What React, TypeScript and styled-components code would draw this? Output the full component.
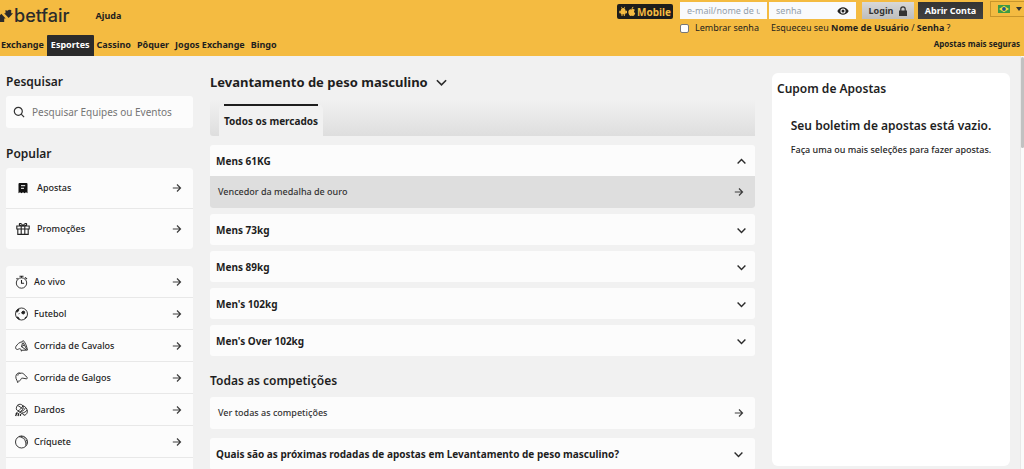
import React, { useState } from 'react';
import styled, { createGlobalStyle, css } from 'styled-components';

const GlobalStyle = createGlobalStyle`
  *, *::before, *::after { box-sizing: border-box; }
  body {
    margin: 0;
    background: #f1f1f1;
    color: #1e1e1e;
    font-family: "Noto Sans", "Open Sans", sans-serif;
    font-size: 9px;
    line-height: 14px;
  }
  button, input { font-family: inherit; font-size: inherit; line-height: inherit; color: inherit; }
  button { border: 0; padding: 0; background: none; cursor: pointer; }
  a { color: inherit; text-decoration: none; }
  h1, h2, h3, p, ul { margin: 0; padding: 0; }
  ul { list-style: none; }
  svg { display: block; flex: none; }
`;

/* ---------- Shell ---------- */

const Page = styled.div`
  display: flex;
  flex-direction: column;
  height: 100vh;
  overflow: hidden;
`;

const Header = styled.header`
  display: flex;
  justify-content: space-between;
  flex: none;
  min-height: 56px;
  background: #f4bb41;
  overflow: hidden;
`;

const HeaderLeft = styled.div`
  display: flex;
  flex-direction: column;
  justify-content: space-between;
`;

const BrandRow = styled.div`
  display: flex;
  align-items: center;
  gap: 26px;
  height: 31px;
`;

const Brand = styled.a`
  display: flex;
  align-items: center;
  color: #2b2b2b;
  font-family: Inter, sans-serif;
  font-size: 18px;
  font-weight: 500;
  line-height: 20px;
`;

const HelpLink = styled.a`
  font-weight: 700;
`;

const Nav = styled.nav`
  display: flex;
`;

const NavLink = styled.a<{ $active?: boolean }>`
  padding: 3px 3px 4px;
  font-weight: 700;
  border-radius: 1px 1px 0 0;
  ${(p) => p.$active && css`
    padding: 3px 4px 4px;
    background: #2b2b2b;
    color: #fff;
  `}
  &:first-child { padding-left: 1px; }
`;

const Account = styled.div`
  display: flex;
  flex-direction: column;
  flex: none;
`;

const AccountTop = styled.div`
  display: flex;
  align-items: flex-start;
  gap: 7px;
  padding-top: 2px;
`;

const MobileBadge = styled.a`
  display: flex;
  align-items: center;
  gap: 1px;
  height: 15px;
  margin-top: 2px;
  padding: 0 2px;
  border-radius: 2px;
  background: #1d1d1b;
  color: #f4bb41;
  font-size: 10px;
  font-weight: 700;
`;

const LoginForm = styled.form`
  display: grid;
  grid-template-columns: 87px 87px 52px 65px;
  column-gap: 2px;
  row-gap: 2px;
`;

const Field = styled.div`
  display: flex;
  align-items: center;
  height: 17px;
  padding: 0 7px;
  background: #f9fafc;
  & > input {
    flex: 1;
    min-width: 0;
    height: 17px;
    padding: 0;
    border: 0;
    outline: 0;
    background: transparent;
  }
  & > input::placeholder { color: #93a0ab; opacity: 1; }
`;

const LoginButton = styled.button`
  display: flex;
  align-items: center;
  justify-content: center;
  gap: 6px;
  height: 17px;
  margin-left: 4px;
  margin-right: -4px;
  background: linear-gradient(#d8d8d8, #bdbdbd);
  color: #333;
  font-weight: 700;
`;

const JoinButton = styled.button`
  height: 17px;
  margin-left: 6px;
  margin-right: -6px;
  background: linear-gradient(#333, #414141);
  color: #fff;
  font-weight: 700;
`;

const Remember = styled.label`
  display: flex;
  align-items: center;
  gap: 6px;
  white-space: nowrap;
  & > input {
    appearance: none;
    width: 9px;
    height: 9px;
    margin: 0;
    border: 1px solid #777;
    border-radius: 2px;
    background: #fff;
  }
  & > input:checked { background: #2b2b2b; }
`;

const Forgot = styled.p`
  grid-column: 2 / -1;
  padding: 0 2px;
  white-space: nowrap;
  & a { font-weight: 700; }
`;

const LocaleButton = styled.button`
  display: flex;
  align-items: center;
  gap: 6px;
  height: 16px;
  margin: -1px 0 0 6px;
  padding: 0 2px 0 7px;
  border: 1px solid #c8952b;
  border-right: 0;
`;

const SaferLink = styled.a`
  align-self: flex-end;
  padding: 2px 4px;
  font-size: 8px;
  font-weight: 700;
`;

const Body = styled.div`
  display: flex;
  flex: 1;
  min-height: 0;
`;

const Columns = styled.div`
  display: grid;
  grid-template-columns: 187px minmax(0, 1fr) 238px;
  grid-template-rows: minmax(0, 1fr);
  gap: 17px;
  flex: 1;
  min-height: 0;
  padding: 17px 10px 0 6px;
  overflow: hidden;
`;

const ScrollTrack = styled.div`
  flex: none;
  width: 4px;
  padding-top: 1px;
  background: #fafafa;
  border-left: 1px solid #e8e8e8;
`;

const ScrollThumb = styled.div`
  height: 22%;
  border-radius: 2px;
  background: #c1c1c1;
`;

/* ---------- Sidebar ---------- */

const Sidebar = styled.aside`
  display: flex;
  flex-direction: column;
`;

const Heading = styled.h2`
  font-size: 12px;
  font-weight: 600;
  line-height: 18px;
`;

const SearchBox = styled.label`
  display: flex;
  align-items: center;
  flex: none;
  gap: 7px;
  height: 32px;
  margin: 5px 0 17px;
  padding: 0 7px;
  border-radius: 3px;
  background: #fcfcfc;
  color: #444;
  & > input {
    flex: 1;
    min-width: 0;
    padding: 0;
    border: 0;
    outline: 0;
    background: transparent;
    font-size: 10px;
  }
  & > input::placeholder { color: #757575; opacity: 1; }
`;

const LinkList = styled.ul`
  display: flex;
  flex-direction: column;
  gap: 1px;
  flex: none;
  margin: 5px 0 12px;
  border-radius: 3px;
  background: #e8e8e8;
  overflow: hidden;
`;

const ItemLink = styled.a<{ $tall?: boolean }>`
  display: flex;
  align-items: center;
  gap: ${(p) => (p.$tall ? 7 : 6)}px;
  padding: ${(p) => (p.$tall ? '13px 10px' : '9px 10px 8px 9px')};
  background: #fcfcfc;
  font-weight: 500;
  & > span { flex: 1; }
`;

/* ---------- Main ---------- */

const Main = styled.main`
  display: flex;
  flex-direction: column;
  min-width: 0;
`;

const TitleButton = styled.button`
  display: flex;
  align-items: center;
  gap: 7px;
  font-size: 13px;
  font-weight: 700;
  line-height: 18px;
`;

const TabBar = styled.div`
  display: flex;
  flex: none;
  margin: 9px 0;
  padding: 4px 9px 0;
  border-radius: 3px 0 0 3px;
  background: linear-gradient(#f1f1f1, #dedede);
`;

const Tab = styled.button`
  padding: 0 5px;
  border-radius: 6px 6px 0 0;
  background: #f1f1f1;
  font-size: 10px;
  font-weight: 700;
  & > span {
    display: block;
    padding: 8px 0;
    border-top: 2px solid #1e1e1e;
  }
`;

const Accordion = styled.section`
  flex: none;
  margin-bottom: 6px;
  border-radius: 3px;
  background: #fcfcfc;
  overflow: hidden;
`;

const AccordionButton = styled.button<{ $inset?: boolean }>`
  display: flex;
  align-items: center;
  justify-content: space-between;
  width: 100%;
  padding: ${(p) => (p.$inset ? '9px 11px 9px 6px' : '9px 8px 8px 6px')};
  font-size: 10px;
  font-weight: 700;
  text-align: left;
`;

const MarketLink = styled.a<{ $shaded?: boolean }>`
  display: flex;
  align-items: center;
  justify-content: space-between;
  padding: 9px 10px 9px 8px;
  border-radius: ${(p) => (p.$shaded ? 0 : 3)}px;
  background: ${(p) => (p.$shaded ? '#dedede' : '#fcfcfc')};
  font-weight: 500;
  color: #333;
`;

const Competitions = styled.section`
  display: flex;
  flex-direction: column;
  flex: none;
  gap: 7px;
  margin: 10px 0 9px;
`;

/* ---------- Bet slip ---------- */

const Slip = styled.aside`
  margin-bottom: 3px;
  padding: 7px 5px;
  border-radius: 6px;
  background: #fff;
`;

const SlipEmpty = styled.div`
  padding-top: 19px;
  text-align: center;
  & > p {
    margin-top: 8px;
    font-weight: 500;
  }
`;

/* ---------- Icons ---------- */

const Arrow = () => (
  <svg width="12" height="12" viewBox="0 0 12 12" fill="none" stroke="#3c3c3c" strokeWidth="1.2" aria-hidden="true">
    <path d="M1.800 6h7.600M6 2.500 9.500 6 6 9.500" />
  </svg>
);

const Chevron = ({ up = false, size = 11 }: { up?: boolean; size?: number }) => (
  <svg width={size} height={size} viewBox="0 0 11 11" fill="none" stroke="#2b2b2b" strokeWidth="1.4" aria-hidden="true">
    <path d={up ? 'M1.6 7.500 5.500 3.600l3.900 3.900' : 'M1.600 3.600 5.500 7.500l3.900-3.900'} />
  </svg>
);

const line = { fill: 'none', stroke: '#222', strokeWidth: 0.9 } as const;

const icons: Record<string, React.ReactNode> = {
  bets: (
    <svg width="14" height="14" viewBox="0 0 14 14">
      <path d="M2.5 3q0-1 1-1h7q1 0 1 1v9.3l-1.5-1-1.5 1-1.5-1-1.5 1-1.5-1-1.5 1Z" fill="#111" />
      <path d="M5 4.700h4.200M5 7.300h3" stroke="#fff" strokeWidth="1" />
    </svg>
  ),
  gift: (
    <svg width="14" height="14" viewBox="0 0 14 14" {...line} strokeWidth={1.1}>
      <path d="M.8 4h12.400v3H.8ZM1.800 7v5.400h10.400V7M5.200 4v8.400M8.800 4v8.400M7 4C5.700 1.200 3.400.9 3.300 2.300 3.300 3.400 4.600 4 7 4c2.400 0 3.700-.6 3.700-1.700C10.600.9 8.300 1.200 7 4Z" />
    </svg>
  ),
  live: (
    <svg width="13" height="14" viewBox="0 0 13 14" {...line}>
      <circle cx="6.5" cy="8" r="5.2" />
      <path d="M4.500 1.200h4M6.500 1v1.800M6.500 5v3.200h2.600M10 2.400l2 1.800M2.500 3.200 1.500 4.200" strokeWidth="1.100" />
    </svg>
  ),
  football: (
    <svg width="13" height="14" viewBox="0 0 13 14" {...line}>
      <circle cx="6.5" cy="7" r="6" />
      <path d="m6.800 5 1.300-1 1.500.6.100 1.600-1.300.8-1.500-.6ZM1.200 4.200l1.600-1.900 1.200.1-.6 1.500-1.400 1.400ZM1.800 9.900l1.700.5.9 1.900-1.600-.8ZM9.900 11.500l.5-1.100 1.300-.5ZM4.300 6.300l-.5.9" fill="#222" />
    </svg>
  ),
  horse: (
    <svg width="13" height="14" viewBox="0 0 13 14" {...line}>
      <path d="M8.200 1.500 7 2.900C4.500 3.100 2.400 5 .8 7.700c-.5 1.100 0 2.400 1 2.700 1.100.4 1.700-.6 2.800-.7 1 0 1.500.5 1.800 2.700M8.200 1.500c2 1.800 3.700 5.800 4.200 9.600l-6.200.2M7.500 4l-1 3.700 4.700 3.200M6.500 7.700 9.200 6M8 3.400l3.700 6.900" />
    </svg>
  ),
  greyhound: (
    <svg width="13" height="14" viewBox="0 0 13 14" {...line}>
      <path d="M3 12 1.900 9.400C.4 7.100.4 3.800 2.400 2.500c1.100-.8 2-.5 3.200-.2 1.400-.4 3-.1 3.700 1.400l2.800 2.600c.6.7.1 1.600-.7 1.500L8 7.200c-1.200-.2-1.900.2-2.200 1.200-.2 1.100-1.300 1.800-2.700 1.800M5.600 2.300C3.800 2.200 2.900 3 2.800 4.600" />
    </svg>
  ),
  darts: (
    <svg width="13" height="14" viewBox="0 0 13 14" {...line}>
      <path d="M2.500 2.300C3.900.6 6.600 1.100 8 2.800c2.700.8 4.600 3.200 4.300 6.300-.2 1.700-1.600 3-3.500 3.300M8 2.800c.8 2.500-.2 4.500-2.200 5.400M2.500 2.300C.7 4.700 1.100 7 2.800 8l6.400 3.800M2.800 8C5 6.900 6.400 5.400 8 2.800M4.400 8.900c3-.3 5.300-1.800 6.200-4.400M6.600 10.100c2.600-.3 4.500-1.400 5.600-3.100M2.500 2.300l5 3.200" />
      <path d="M.6 12.900 2 9.600M3 13l.8-2.800M5.300 12.900l.4-1.700M.7 11l2-1.200" strokeWidth="1.300" />
    </svg>
  ),
  cricket: (
    <svg width="13" height="14" viewBox="0 0 13 14" {...line}>
      <circle cx="6.5" cy="7" r="6" />
      <path d="M4 1.700c4.500.4 7.400 3.800 6.800 8.900" />
      <path d="M5.900 1.200c3.900.7 6.200 3.700 6 7.700" strokeDasharray="1 .7" />
    </svg>
  ),
};

const LogoMark = () => (
  <svg width="14" height="14" viewBox="0 0 14 14" fill="#2b2b2b" aria-hidden="true">
    <path d="M5.500 1 7.200 1.700 9 .8 11.200 1v3.200h1.900L8.700 9 4.100 4.200h1.400ZM1.300 4.800 5.700 9.400H4.200V13H0V6.200Z" />
  </svg>
);

const AndroidApple = () => (
  <svg width="17" height="11" viewBox="0 0 17 11" fill="currentColor" aria-hidden="true">
    <path d="M1.800 4.700C1.800 1 6.500 1 6.500 4.700ZM1.800 4.600h4.700v3.600H1.800ZM.3 4.800h1.400v2.400H.3ZM6.600 4.800H8v2.400H6.600ZM2.500 8h1v2h-1ZM4.800 8h1v2h-1ZM2 1l.5-.3.9 1.400-.5.3ZM6.200 1 5.700.7l-.9 1.400.5.3Z" />
    <path d="M12.700 3.400c.8-.6 2.500-.6 3.200.5-1.300.9-1.100 2.600.3 3.300-.5 1.500-1.500 3.100-2.500 2.700-.7-.3-1.200-.3-1.800 0C10.500 10.300 9.300 8 9.300 6.100c0-2.200 1.900-3.500 3.400-2.700ZM12.600 2.900c0-1.200.8-2 1.800-2.200.1 1.200-.7 2.100-1.800 2.200Z" />
  </svg>
);

const Flag = () => (
  <svg width="12" height="8" viewBox="0 0 12 8" aria-hidden="true">
    <path fill="#3d9a45" d="M0 0h12v8H0z" />
    <path fill="#f5dc3d" d="m6 .7 5 3.300-5 3.300L1 4z" />
    <circle cx="6" cy="4" r="1.900" fill="#27538f" />
  </svg>
);

/* ---------- Data ---------- */

const popular = [
  { icon: 'bets', label: 'Apostas' },
  { icon: 'gift', label: 'Promoções' },
];

const sports = [
  { icon: 'live', label: 'Ao vivo' },
  { icon: 'football', label: 'Futebol' },
  { icon: 'horse', label: 'Corrida de Cavalos' },
  { icon: 'greyhound', label: 'Corrida de Galgos' },
  { icon: 'darts', label: 'Dardos' },
  { icon: 'cricket', label: 'Críquete' },
];

const sections = ['Exchange', 'Esportes', 'Cassino', 'Pôquer', 'Jogos Exchange', 'Bingo'];
const classes = ['Mens 61KG', 'Mens 73kg', 'Mens 89kg', "Men's 102kg", "Men's Over 102kg"];

/* Blank end row that closes the sports list under the last sport. */
const ListEnd = styled.li`
  height: 31px;
  background: #fcfcfc;
`;

function Links({ items, tall }: { items: typeof sports; tall?: boolean }) {
  return (
    <LinkList>
      {items.map((item) => (
        <li key={item.icon}>
          <ItemLink href="#" $tall={tall}>
            {icons[item.icon]}
            <span>{item.label}</span>
            <Arrow />
          </ItemLink>
        </li>
      ))}
      {!tall && <ListEnd />}
    </LinkList>
  );
}

export default function App() {
  const [open, setOpen] = useState<string | null>(classes[0]);

  return (
    <Page>
      <GlobalStyle />
      <Header>
        <HeaderLeft>
          <BrandRow>
            <Brand href="#"><LogoMark />betfair</Brand>
            <HelpLink href="#">Ajuda</HelpLink>
          </BrandRow>
          <Nav>
            {sections.map((name) => (
              <NavLink key={name} href="#" $active={name === 'Esportes'}>{name}</NavLink>
            ))}
          </Nav>
        </HeaderLeft>
        <Account>
          <AccountTop>
            <MobileBadge href="#"><AndroidApple />Mobile</MobileBadge>
            <LoginForm onSubmit={(e) => e.preventDefault()}>
              <Field><input aria-label="E-mail ou nome de usuário" placeholder="e-mail/nome de usuário" /></Field>
              <Field>
                <input type="password" aria-label="Senha" placeholder="senha" />
                <svg width="12" height="10" viewBox="0 0 12 10" aria-hidden="true">
                  <path d="M.3 5C3-.1 9-.1 11.700 5 9 10.100 3 10.100.3 5Z" fill="#222" />
                  <circle cx="6" cy="5" r="2.600" fill="#f9fafc" />
                  <circle cx="6" cy="5" r="1.500" fill="#222" />
                </svg>
              </Field>
              <LoginButton type="submit">
                Login
                <svg width="8" height="10" viewBox="0 0 8 10" aria-hidden="true">
                  <path d="M0 4.500h8V10H0z" fill="#333" />
                  <path d="M1.800 5V3a2.200 2.200 0 0 1 4.400 0v2" fill="none" stroke="#333" strokeWidth="1.200" />
                </svg>
              </LoginButton>
              <JoinButton type="button">Abrir Conta</JoinButton>
              <Remember><input type="checkbox" />Lembrar senha</Remember>
              <Forgot>Esqueceu seu <a href="#">Nome de Usuário</a> / <a href="#">Senha</a> ?</Forgot>
            </LoginForm>
            <LocaleButton type="button" aria-label="Idioma">
              <Flag />
              <svg width="6" height="4" viewBox="0 0 6 4" aria-hidden="true"><path d="M0 0h6L3 4Z" fill="#333" /></svg>
            </LocaleButton>
          </AccountTop>
          <SaferLink href="#">Apostas mais seguras</SaferLink>
        </Account>
      </Header>

      <Body>
        <Columns>
          <Sidebar>
            <Heading>Pesquisar</Heading>
            <SearchBox>
              <svg width="12" height="12" viewBox="0 0 12 12" fill="none" stroke="#333" strokeWidth="1.200" aria-hidden="true">
                <circle cx="5.300" cy="5.300" r="4" /><path d="m8.200 8.200 2.900 2.900" />
              </svg>
              <input type="search" aria-label="Pesquisar" placeholder="Pesquisar Equipes ou Eventos" />
            </SearchBox>
            <Heading>Popular</Heading>
            <Links items={popular} tall />
            <Links items={sports} />
          </Sidebar>

          <Main>
            <h1>
              <TitleButton type="button">Levantamento de peso masculino<Chevron size={13} /></TitleButton>
            </h1>
            <TabBar role="tablist">
              <Tab type="button" role="tab" aria-selected="true"><span>Todos os mercados</span></Tab>
            </TabBar>
            {classes.map((name) => (
              <Accordion key={name}>
                <AccordionButton
                  type="button"
                  aria-expanded={open === name}
                  onClick={() => setOpen(open === name ? null : name)}
                >
                  {name}
                  <Chevron up={open === name} />
                </AccordionButton>
                {open === name && <MarketLink href="#" $shaded>Vencedor da medalha de ouro<Arrow /></MarketLink>}
              </Accordion>
            ))}
            <Competitions>
              <Heading>Todas as competições</Heading>
              <MarketLink href="#">Ver todas as competições<Arrow /></MarketLink>
            </Competitions>
            <Accordion>
              <AccordionButton type="button" aria-expanded="false" $inset>
                Quais são as próximas rodadas de apostas em Levantamento de peso masculino?
                <Chevron />
              </AccordionButton>
            </Accordion>
          </Main>

          <Slip>
            <Heading>Cupom de Apostas</Heading>
            <SlipEmpty>
              <Heading as="h3">Seu boletim de apostas está vazio.</Heading>
              <p>Faça uma ou mais seleções para fazer apostas.</p>
            </SlipEmpty>
          </Slip>
        </Columns>
        <ScrollTrack aria-hidden="true"><ScrollThumb /></ScrollTrack>
      </Body>
    </Page>
  );
}
